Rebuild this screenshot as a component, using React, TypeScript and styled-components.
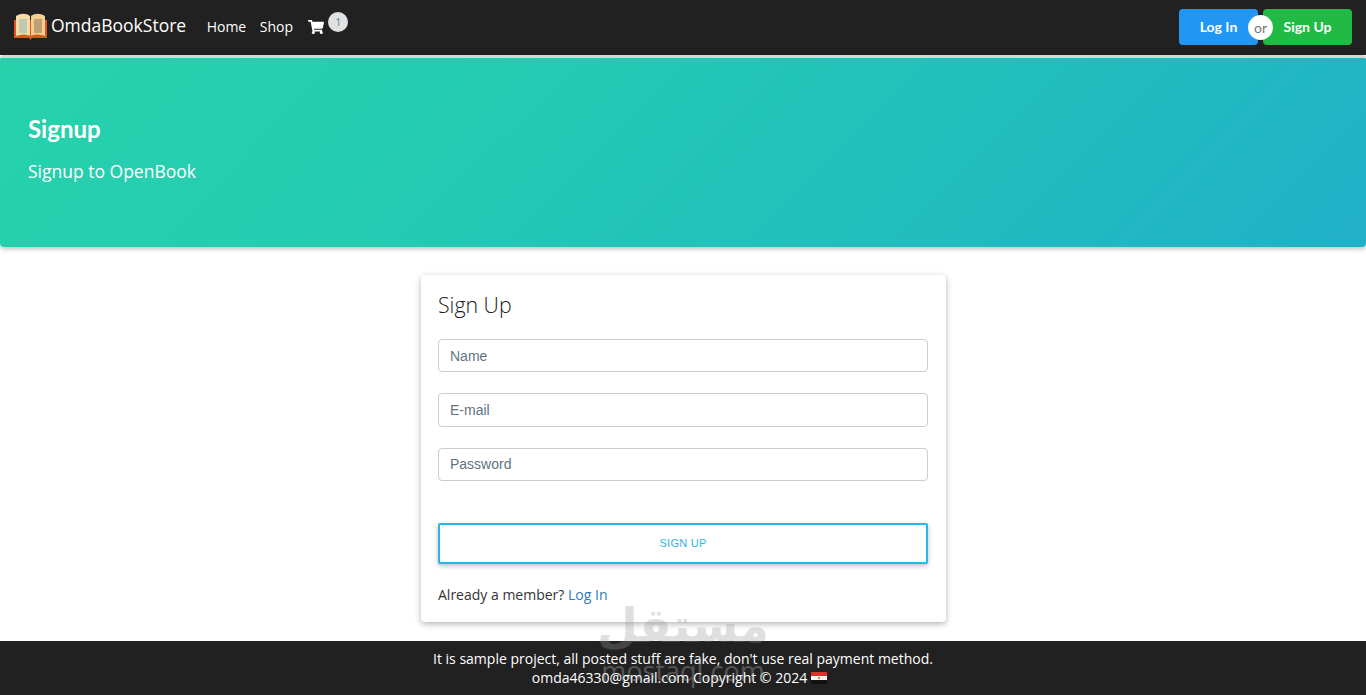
import React from "react";
import styled, { createGlobalStyle } from "styled-components";
import { FaShoppingCart } from "react-icons/fa";

const GlobalStyle = createGlobalStyle`
  html, body {
    margin: 0;
    padding: 0;
    background: #fff;
    font-family: "Open Sans", sans-serif;
  }
  * { box-sizing: border-box; }
`;

const BookLogo = () => (
  <svg width="33" height="27" viewBox="0 0 33 27">
    <path d="M0 7h33v18H18l-1.500 2-1.500-2H0z" fill="#e8501e" />
    <path d="M2 3c5-3 10-3 14 0v20c-4-2-9-2-14 0z" fill="#f8dca6" />
    <path d="M31 3c-5-3-10-3-14 0v20c4-2 9-2 14 0z" fill="#f3cf8e" />
    <path d="M5 6h8v14H5z" fill="#a9c4b4" opacity="0.75" />
    <path d="M20 6h8v14h-8z" fill="#a8926c" opacity="0.75" />
  </svg>
);

const EgyptFlag = () => (
  <svg width="16" height="12" viewBox="0 0 16 12">
    <rect width="16" height="4" fill="#d8352a" />
    <rect y="4" width="16" height="4" fill="#f4f4f4" />
    <rect y="8" width="16" height="4" fill="#111" />
    <rect x="7" y="5" width="2" height="2" fill="#c09a30" />
  </svg>
);

const App = (): JSX.Element => {
  return (
    <>
      <GlobalStyle />
      <Page>
        <Navbar>
          <Brand href="#">
            <BookLogo />
            <BrandName>OmdaBookStore</BrandName>
          </Brand>
          <NavLink href="#">Home</NavLink>
          <NavLink href="#">Shop</NavLink>
          <CartLink href="#">
            <FaShoppingCart size={16} />
            <CartBadge>1</CartBadge>
          </CartLink>
          <AuthButtons>
            <AuthButton $color="#2196f3" $width={79}>
              Log In
            </AuthButton>
            <OrCircle>or</OrCircle>
            <AuthButton $color="#21ba45" $width={89} $gap={5}>
              Sign Up
            </AuthButton>
          </AuthButtons>
        </Navbar>
        <Hero>
          <HeroTitle>Signup</HeroTitle>
          <HeroSubtitle>Signup to OpenBook</HeroSubtitle>
        </Hero>
        <Main>
          <Card>
            <CardTitle>Sign Up</CardTitle>
            <Fields>
              <TextInput placeholder="Name" />
              <TextInput placeholder="E-mail" />
              <TextInput placeholder="Password" type="password" />
            </Fields>
            <SubmitButton>SIGN UP</SubmitButton>
            <MemberLine>
              Already a member? <MemberLink href="#">Log In</MemberLink>
            </MemberLine>
          </Card>
        </Main>
        <Footer>
          <FooterLine>It is sample project, all posted stuff are fake, don't use real payment method.</FooterLine>
          <FooterCopy>
            omda46330@gmail.com Copyright © 2024 <EgyptFlag />
          </FooterCopy>
        </Footer>
        <Watermark>
          <WatermarkArabic>مستقل</WatermarkArabic>
          <WatermarkLatin>mostaql.com</WatermarkLatin>
        </Watermark>
      </Page>
    </>
  );
};

export default App;

const Page = styled.div`
  position: relative;
  height: 695px;
  overflow: hidden;
  display: flex;
  flex-direction: column;
`;

const Navbar = styled.nav`
  height: 55px;
  flex-shrink: 0;
  display: flex;
  align-items: center;
  padding: 0 14px 2px;
  background: #212121;
  color: #fff;
`;

const Brand = styled.a`
  display: flex;
  align-items: center;
  gap: 4px;
  margin-right: 20.5px;
  color: #fff;
  text-decoration: none;
`;

const BrandName = styled.span`
  font-size: 17.5px;
  line-height: 24px;
  margin-bottom: 3px;
`;

const NavLink = styled.a`
  margin-right: 13.5px;
  font-size: 14px;
  color: #fff;
  text-decoration: none;
`;

const CartLink = styled.a`
  position: relative;
  display: flex;
  color: #fff;
  margin: 1px 0 0 2px;
`;

const CartBadge = styled.span`
  position: absolute;
  left: 20px;
  top: -7px;
  width: 20px;
  height: 20px;
  border-radius: 50%;
  background: #e0e1e2;
  color: #5a7a8a;
  font-size: 10px;
  line-height: 20px;
  text-align: center;
`;

const AuthButtons = styled.div`
  margin-left: auto;
  display: flex;
  align-items: center;
  position: relative;
`;

const AuthButton = styled.button<{ $color: string; $width: number; $gap?: number }>`
  width: ${(props) => props.$width}px;
  height: 36px;
  border: 0;
  padding: 0;
  margin-left: ${(props) => props.$gap || 0}px;
  border-radius: 4px;
  background: ${(props) => props.$color};
  color: #fff;
  font-family: Lato, sans-serif;
  font-size: 14px;
  font-weight: 700;
`;

const OrCircle = styled.span`
  position: absolute;
  left: 69px;
  top: 6px;
  width: 25px;
  height: 25px;
  border-radius: 50%;
  background: #fff;
  color: #777;
  font-family: Lato, sans-serif;
  font-size: 14px;
  line-height: 26px;
  text-align: center;
`;

const Hero = styled.header`
  height: 192px;
  flex-shrink: 0;
  display: flex;
  flex-direction: column;
  padding: 55px 28px 0;
  border-top: 3px solid #d6d6d6;
  border-radius: 4px;
  background: linear-gradient(135deg, #26d2ac 0%, #24cbb2 35%, #20b0c8 100%);
  box-shadow: 0 2px 5px rgba(0, 0, 0, 0.25);
  color: #fff;
`;

const HeroTitle = styled.h1`
  margin: 0;
  font-family: Lato, sans-serif;
  font-size: 24px;
  line-height: 32px;
  font-weight: 700;
`;

const HeroSubtitle = styled.p`
  margin: 14px 0 0;
  font-size: 17.5px;
  line-height: 24px;
`;

const Main = styled.main`
  flex: 1;
  display: flex;
  justify-content: center;
  padding-top: 28px;
  margin-left: 1px;
`;

const Card = styled.section`
  width: 525px;
  height: 347px;
  padding: 14px 18px 14px 17px;
  border-radius: 4px;
  background: #fff;
  box-shadow: 0 2px 6px rgba(0, 0, 0, 0.3);
`;

const CardTitle = styled.h2`
  margin: 0;
  font-size: 21.3px;
  line-height: 32px;
  font-weight: 300;
  color: #212121;
`;

const Fields = styled.div`
  display: flex;
  flex-direction: column;
  gap: 21px;
  margin-top: 18px;
`;

const TextInput = styled.input`
  width: 100%;
  height: 33.4px;
  padding: 0 11px;
  border: 1px solid #ccc;
  border-radius: 4px;
  background: #fff;
  font-family: "Liberation Sans", Arial, sans-serif;
  font-size: 14px;
  &::placeholder {
    color: #5f7480;
    opacity: 1;
  }
`;

const SubmitButton = styled.button`
  display: block;
  width: 100%;
  height: 41px;
  margin-top: 41.8px;
  padding: 0 0 1px;
  border: 2px solid #29b6e8;
  border-radius: 2px;
  background: #fff;
  box-shadow: 0 2px 5px rgba(0, 0, 0, 0.25);
  color: #29b6e8;
  font-family: "Liberation Sans", Arial, sans-serif;
  font-size: 11px;
  letter-spacing: 0.25px;
`;

const MemberLine = styled.p`
  margin: 21px 0 0;
  font-size: 14px;
  line-height: 20px;
  color: #333;
`;

const MemberLink = styled.a`
  color: #2b7bbf;
  text-decoration: none;
`;

const Footer = styled.footer`
  height: 54px;
  flex-shrink: 0;
  padding-top: 8px;
  background: #212121;
  color: #fff;
  text-align: center;
`;

const FooterLine = styled.div`
  font-size: 14px;
  line-height: 20px;
  display: flex;
  justify-content: center;
  align-items: center;
  gap: 4px;
`;

const FooterCopy = styled(FooterLine)`
  margin-top: -1px;
  padding-right: 7px;
`;

const Watermark = styled.div`
  position: absolute;
  left: 600px;
  top: 593px;
  width: 166px;
  display: flex;
  flex-direction: column;
  align-items: center;
  opacity: 0.3;
  color: #999;
  pointer-events: none;
`;

const WatermarkArabic = styled.span`
  font-family: "DejaVu Sans", sans-serif;
  font-size: 47px;
  font-weight: 700;
  line-height: 66px;
`;

const WatermarkLatin = styled.span`
  font-family: "Open Sans", sans-serif;
  font-size: 27px;
  line-height: 24px;
  color: #ccc;
`;
